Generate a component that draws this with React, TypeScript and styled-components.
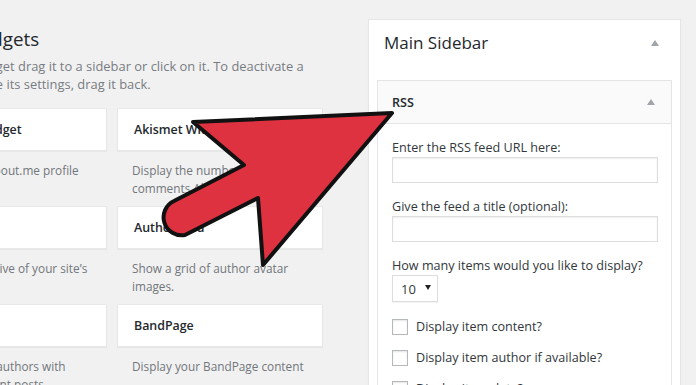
import React from 'react';
import styled, { createGlobalStyle } from 'styled-components';

const GlobalStyle = createGlobalStyle`
    html, body {
        margin: 0;
        padding: 0;
    }
    body {
        background: #f1f1f1;
        font-family: "Open Sans", "Liberation Sans", sans-serif;
        color: #23282d;
    }
`;

const Page = styled.div`
    position: relative;
    width: 696px;
    height: 385px;
    overflow: hidden;
    display: flex;
    align-items: flex-start;
    gap: 45px;
    background: #f1f1f1;
`;

const Available = styled.section`
    flex: none;
    width: 422px;
    margin-left: -99px;
    padding-top: 27px;
`;

const Heading = styled.h2`
    margin: 0 0 0 -15px;
    font-size: 18.8px;
    font-weight: 400;
    line-height: 24px;
    white-space: nowrap;
    color: #23282d;
`;

const Intro = styled.p`
    margin: 6px 0 15px -5px;
    font-size: 12.9px;
    line-height: 18px;
    color: #787c82;
    white-space: nowrap;
`;

const WidgetGrid = styled.div`
    display: grid;
    grid-template-columns: 206px 206px;
    column-gap: 10px;
    row-gap: 9px;
`;

const WidgetItem = styled.div`
    display: flex;
    flex-direction: column;
`;

const WidgetCard = styled.div`
    box-sizing: border-box;
    height: 43px;
    display: flex;
    align-items: center;
    padding: 0 15px 0 16px;
    background: #fff;
    border: 1px solid #e8e8e8;
    box-shadow: 0 1px 1px rgba(0, 0, 0, 0.04);
    font-size: 12.4px;
    font-weight: 600;
    white-space: nowrap;
    color: #23282d;
`;

const WidgetDesc = styled.div`
    margin-top: 10px;
    padding-left: 15px;
    font-size: 11.8px;
    line-height: 18px;
    color: #72777c;
    white-space: nowrap;
    height: 36px;
`;

const Sidebar = styled.section`
    flex: none;
    box-sizing: border-box;
    width: 313px;
    height: 400px;
    margin-top: 19px;
    padding: 0 8px 0 8px;
    background: #fff;
    border: 1px solid #e5e5e5;
    box-shadow: 0 1px 1px rgba(0, 0, 0, 0.04);
`;

const SidebarHead = styled.div`
    box-sizing: border-box;
    height: 60px;
    display: flex;
    justify-content: space-between;
    align-items: flex-start;
    padding: 11px 13px 0 7px;
`;

const SidebarTitle = styled.h3`
    margin: 0;
    font-size: 17px;
    font-weight: 400;
    line-height: 24px;
    color: #23282d;
`;

const Toggle = styled.span<{ $top: number }>`
    width: 0;
    height: 0;
    margin-top: ${(p) => p.$top}px;
    border-left: 4px solid transparent;
    border-right: 4px solid transparent;
    border-bottom: 6px solid #a0a5aa;
`;

const Widget = styled.div`
    border: 1px solid #e5e5e5;
    border-bottom: none;
    background: #fff;
`;

const WidgetTop = styled.div`
    box-sizing: border-box;
    height: 43px;
    display: flex;
    justify-content: space-between;
    align-items: center;
    padding: 0 16px 0 14px;
    background: #fafafa;
    border-bottom: 1px solid #e5e5e5;
    font-size: 12.6px;
    font-weight: 600;
`;

const WidgetBody = styled.div`
    padding: 15px 15px 0 14px;
`;

const Field = styled.div`
    margin-bottom: 15px;
`;

const Label = styled.div`
    font-size: 12.6px;
    line-height: 18px;
    color: #32373c;
    white-space: nowrap;
`;

const TextInput = styled.input`
    box-sizing: border-box;
    display: block;
    width: 266px;
    height: 26px;
    margin: 0;
    border: 1px solid #ddd;
    box-shadow: inset 0 1px 2px rgba(0, 0, 0, 0.07);
    background: #fff;
    outline: none;
`;

const Select = styled.div`
    box-sizing: border-box;
    width: 46px;
    height: 27px;
    display: flex;
    align-items: center;
    gap: 9px;
    padding-left: 8px;
    border: 1px solid #ddd;
    box-shadow: 0 1px 1px rgba(0, 0, 0, 0.04);
    font-size: 13px;
    color: #32373c;
`;

const Caret = styled.span`
    width: 0;
    height: 0;
    border-left: 3px solid transparent;
    border-right: 3px solid transparent;
    border-top: 5px solid #222;
    margin-top: -3px;
`;

const Checks = styled.div`
    margin-top: 17px;
    display: flex;
    flex-direction: column;
    gap: 16px;
`;

const CheckRow = styled.label`
    display: flex;
    align-items: center;
    gap: 8px;
    height: 15px;
    font-size: 12.6px;
    color: #32373c;
    white-space: nowrap;
`;

const Box = styled.span`
    box-sizing: border-box;
    width: 16px;
    height: 16px;
    border: 1px solid #b4b9be;
    background: #fff;
    box-shadow: inset 0 1px 2px rgba(0, 0, 0, 0.1);
`;

const Overlay = styled.svg`
    position: absolute;
    left: 0;
    top: 0;
    pointer-events: none;
`;

const widgets = [
    { title: 'About.me Widget', desc: ['Display your about.me profile'] },
    { title: 'Akismet Widget', desc: ['Display the number of spam', 'comments Akismet has caught'] },
    { title: 'Archives', desc: ['A monthly archive of your site’s', 'Posts.'] },
    { title: 'Author Grid', desc: ['Show a grid of author avatar', 'images.'] },
    { title: 'Authors', desc: ['A list of all the authors with', 'their most recent posts.'] },
    { title: 'BandPage', desc: ['Display your BandPage content'] },
];

const checks = ['Display item content?', 'Display item author if available?', 'Display item date?'];

export default function App() {
    return (
        <Page>
            <GlobalStyle />
            <Available>
                <Heading>Available Widgets</Heading>
                <Intro>
                    To activate a widget drag it to a sidebar or click on it. To deactivate a
                    <br />
                    widget and delete its settings, drag it back.
                </Intro>
                <WidgetGrid>
                    {widgets.map((w) => (
                        <WidgetItem key={w.title}>
                            <WidgetCard>{w.title}</WidgetCard>
                            <WidgetDesc>
                                {w.desc.map((line) => (
                                    <div key={line}>{line}</div>
                                ))}
                            </WidgetDesc>
                        </WidgetItem>
                    ))}
                </WidgetGrid>
            </Available>

            <Sidebar>
                <SidebarHead>
                    <SidebarTitle>Main Sidebar</SidebarTitle>
                    <Toggle $top={9} />
                </SidebarHead>
                <Widget>
                    <WidgetTop>
                        <span>RSS</span>
                        <Toggle $top={0} />
                    </WidgetTop>
                    <WidgetBody>
                        <Field>
                            <Label>Enter the RSS feed URL here:</Label>
                            <TextInput type="text" />
                        </Field>
                        <Field>
                            <Label>Give the feed a title (optional):</Label>
                            <TextInput type="text" />
                        </Field>
                        <Label>How many items would you like to display?</Label>
                        <Select>
                            10 <Caret />
                        </Select>
                        <Checks>
                            {checks.map((c) => (
                                <CheckRow key={c}>
                                    <Box />
                                    {c}
                                </CheckRow>
                            ))}
                        </Checks>
                    </WidgetBody>
                </Widget>
            </Sidebar>

            <Overlay width="696" height="385" viewBox="0 0 696 385">
                <path
                    d="M392 113 L193 122 L244 165 L174 201 A18 18 0 0 0 185 235 L258 198 L263 265 Z"
                    fill="#de3241"
                    stroke="#111"
                    strokeWidth="4"
                    strokeLinejoin="round"
                />
            </Overlay>
        </Page>
    );
}
